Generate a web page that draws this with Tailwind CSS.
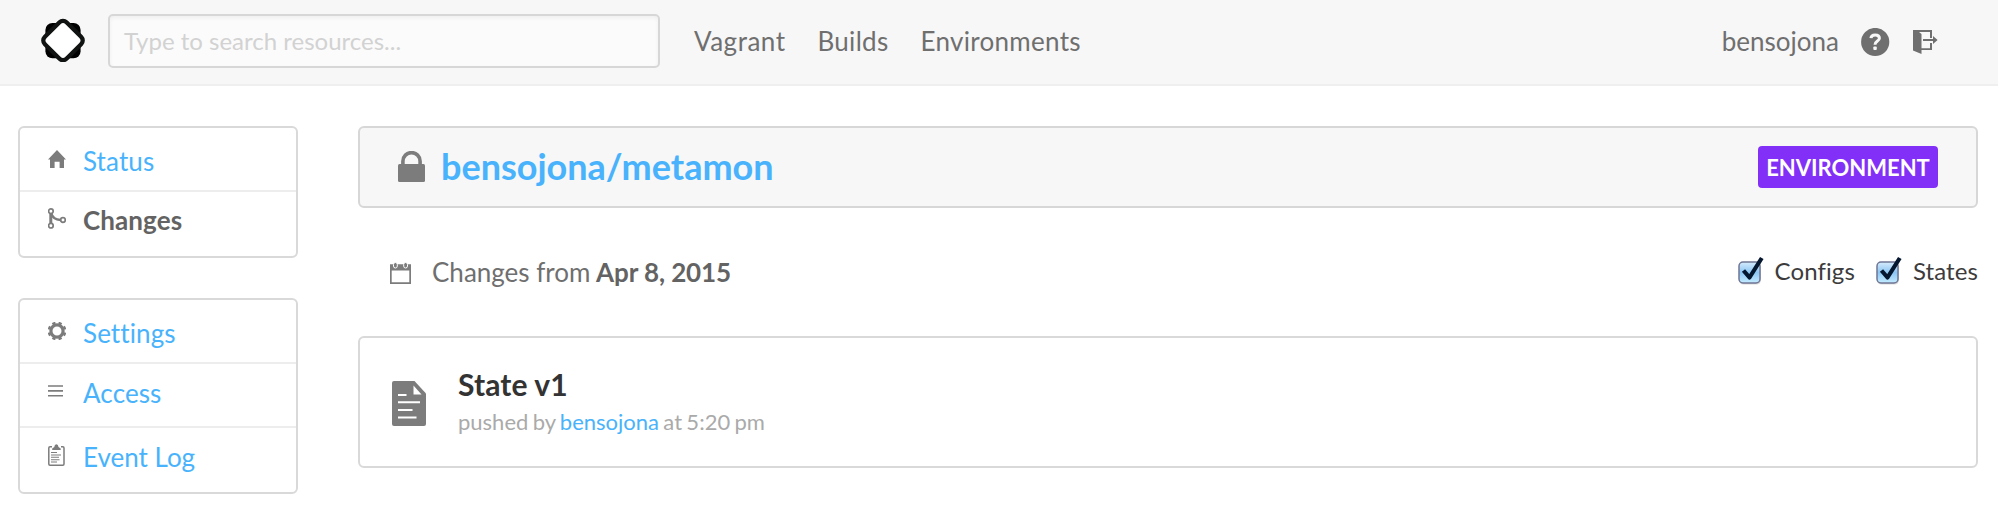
<!DOCTYPE html>
<html lang="en">
<head>
<meta charset="utf-8">
<title>bensojona/metamon</title>
<script src="https://cdn.jsdelivr.net/npm/@tailwindcss/browser@4"></script>
</head>
<body class="w-[1998px] h-[510px] overflow-hidden bg-white font-[Lato,sans-serif] text-[26px] leading-8 text-[#6f6f6f] antialiased">

<header class="flex h-[86px] items-start border-b-2 border-[#efefef] bg-[#f7f7f7] pl-[41px] pr-[60px]">
  <svg class="mt-[18px] size-[44px] shrink-0" viewBox="0 0 44 44">
    <rect x="4.4" y="5" width="35.2" height="35.2" rx="7" fill="#000"/>
    <rect x="4.500" y="5" width="35" height="35" rx="7" transform="rotate(45 22 22.5)" fill="#101312"/>
    <rect x="8.700" y="9.200" width="26.600" height="26.600" rx="3.500" transform="rotate(45 22 22.5)" fill="#fff"/>
  </svg>
  <div class="ml-[23px] mt-[14px] flex h-[54px] w-[552px] items-center rounded-[5px] border-2 border-[#d7d7d7] bg-[#fbfbfb] pl-[14px] shadow-[inset_0_2px_4px_rgba(0,0,0,0.05)]">
    <span class="text-2xl text-[#d2d2d2]">Type to search resources...</span>
  </div>
  <nav class="ml-[34px] mt-[25px] flex gap-[32px] tracking-[0.3px]">
    <a class="tracking-[0.5px]">Vagrant</a><a>Builds</a><a>Environments</a>
  </nav>
  <div class="ml-auto flex">
    <span class="mt-[25px]">bensojona</span>
    <svg class="ml-[22px] mt-[28px] size-[29px]" viewBox="0 0 29 29">
      <circle cx="14.2" cy="14" r="14.1" fill="#6f6f6f"/>
      <path d="M9.900 10.200C10.100 7.500 11.900 6.900 14.200 6.900c2.600 0 4.200 1.400 4.200 3.300 0 3-4.400 2.800-4.400 6.600" fill="none" stroke="#f7f7f7" stroke-width="3"/>
      <rect x="12.300" y="18.600" width="3.500" height="3.500" rx="1" fill="#f7f7f7"/>
    </svg>
    <svg class="ml-[23px] mt-[30px] h-[25px] w-[25px]" viewBox="0 0 25 25" fill="#6f6f6f">
      <path d="M0 0h19v8h-2V2H6l2.500 2V24L0 20.500z"/>
      <path d="M8 18.200h9V13h2v7H8zM10 9h10V6l4.600 4L20 14v-3H10z"/>
    </svg>
  </div>
</header>

<div class="flex pl-[18px] pr-5 pt-10">
  <aside class="flex w-[280px] shrink-0 flex-col gap-[40px] text-[#48b3fc] tracking-[0.1px]">
    <ul class="rounded-[6px] border-2 border-[#d9d9d9]">
      <li class="flex h-[64px] items-start border-b-2 border-[#ededed] pl-[28px] pt-[17px]">
        <svg class="mt-[5px] h-[18px] w-[18px]" viewBox="0 0 18 18" fill="#7c7c7c"><path d="M9 0l9 9.600h-2V18h-4.400v-6.200H6.600V18H2V9.600H0z"/></svg>
        <a class="ml-[17px]">Status</a>
      </li>
      <li class="flex h-[64px] items-start pl-[28px] pt-[12px]">
        <svg class="mt-[4px] h-[21px] w-[18px]" viewBox="0 0 18 21" fill="none" stroke="#7c7c7c" stroke-width="1.700">
          <path d="M2.800 5.500v10" stroke-width="3"/>
          <path d="M3 5C4.500 10 8 11.800 12.500 12" stroke-width="2.600"/>
          <circle cx="2.900" cy="3.200" r="2.300" fill="#fff"/><circle cx="2.900" cy="17.700" r="2.300" fill="#fff"/><circle cx="15" cy="12" r="2.300" fill="#fff"/>
        </svg>
        <a class="ml-[17px] font-bold text-[#636363]">Changes</a>
      </li>
    </ul>
    <ul class="rounded-[6px] border-2 border-[#d9d9d9]">
      <li class="flex h-[64px] items-start border-b-2 border-[#ededed] pl-[28px] pt-[17px]">
        <svg class="mt-[5px] size-[18px]" viewBox="0 0 18 18" fill="none" stroke="#7c7c7c">
          <circle cx="9" cy="9" r="6.100" stroke-width="3.200"/>
          <circle cx="9" cy="9" r="8.200" stroke-width="2.400" pathLength="80" stroke-dasharray="5 5" stroke-dashoffset="7.500"/>
        </svg>
        <a class="ml-[17px]">Settings</a>
      </li>
      <li class="flex h-[64px] items-start border-b-2 border-[#ededed] pl-[28px] pt-[13px]">
        <svg class="mt-[8px] h-[12px] w-[18px]" viewBox="0 0 18 12" fill="#7c7c7c"><path d="M0 .3h15v1.500H0zM0 5h15v1.800H0zM0 9.900h15v1.500H0z"/></svg>
        <a class="ml-[17px]">Access</a>
      </li>
      <li class="flex h-[64px] items-start pl-[28px] pt-[13px]">
        <svg class="mt-[3px] h-[22px] w-[18px]" viewBox="0 0 18 22" fill="#7c7c7c">
          <path d="M4 2.700H2Q.8 2.700.8 4v16q0 1.200 1.200 1.200h12.800q1.200 0 1.200-1.200V4q0-1.300-1.200-1.300H13" fill="none" stroke="#7c7c7c" stroke-width="1.500"/>
          <path d="M4.200 6V4.500L6.300 3Q6.500.2 8.400.2T10.500 3l2.200 1.500V6z"/>
          <path d="M3 8h6v1H3zM3 10.400h10v1H3zM3 12.800h8v1H3zM3 15.200h8.500v1H3zM3 17.600h6v1H3z"/>
        </svg>
        <a class="ml-[17px] tracking-normal">Event Log</a>
      </li>
    </ul>
  </aside>

  <main class="ml-[60px] flex flex-1 flex-col">
    <section class="flex h-[82px] items-start rounded-[6px] border-2 border-[#d7d7d7] bg-[#f7f7f7] pl-[38px] pr-[38px]">
      <svg class="mt-[23px] h-[31px] w-[27px]" viewBox="0 0 27 31" fill="#7c7c7c">
        <path d="M4.900 14V10.200a8.600 8.600 0 0 1 17.200 0V14" fill="none" stroke="#7c7c7c" stroke-width="3.600"/>
        <rect y="13" width="27" height="18" rx="1.500"/>
      </svg>
      <h1 class="ml-[16px] mt-[16px] text-4xl leading-[44px] font-bold text-[#48b3fc]">bensojona/metamon</h1>
      <span class="ml-auto mt-[18px] h-[42px] w-[180px] rounded-[4px] bg-[#8230f8] text-center text-[22px] leading-[44px] font-bold text-white">ENVIRONMENT</span>
    </section>

    <div class="flex h-[128px] items-start pl-[32px]">
      <svg class="mt-[54px] h-[22px] w-[22px]" viewBox="0 0 22 22" fill="#7c7c7c">
        <path fill-rule="evenodd" d="M0 2.300h21V22H0zM1.700 8.500v11.800h17.600V8.500z"/>
        <rect x="3.500" y=".5" width="3.800" height="5.500" rx="1.900" stroke="#fff" stroke-width="1"/>
        <rect x="13.700" y=".5" width="3.800" height="5.500" rx="1.900" stroke="#fff" stroke-width="1"/>
      </svg>
      <p class="ml-[20px] mt-[48px]">Changes from <strong class="-ml-px font-bold tracking-[-0.1px] text-[#636363]">Apr 8, 2015</strong></p>
      <div class="ml-auto mt-[47px] flex text-2xl tracking-[0.1px] text-[#3c3c3c]">
        <label class="flex">
          <svg class="mr-[9px] h-[34px] w-[29px]" viewBox="0 0 29 34">
            <defs><linearGradient id="box" x1="0" y1="0" x2="0" y2="1"><stop offset="0" stop-color="#d6ebfb"/><stop offset=".5" stop-color="#8cc6f4"/><stop offset="1" stop-color="#c4ecff"/></linearGradient></defs>
            <rect x="2" y="8" width="22" height="21.500" rx="4.500" fill="#000" opacity=".15"/>
            <rect x="2" y="7" width="21" height="21" rx="4" fill="url(#box)" stroke="#6f7594" stroke-width="1.500"/>
            <path d="M6.500 15.500l6 7L24.800 3" fill="none" stroke="#04172e" stroke-width="4.200" stroke-linejoin="round"/>
          </svg>Configs</label>
        <label class="ml-[20px] flex">
          <svg class="mr-[9px] h-[34px] w-[29px]" viewBox="0 0 29 34">
            <rect x="2" y="8" width="22" height="21.500" rx="4.500" fill="#000" opacity=".15"/>
            <rect x="2" y="7" width="21" height="21" rx="4" fill="url(#box)" stroke="#6f7594" stroke-width="1.500"/>
            <path d="M6.500 15.500l6 7L24.800 3" fill="none" stroke="#04172e" stroke-width="4.200" stroke-linejoin="round"/>
          </svg>States</label>
      </div>
    </div>

    <section class="flex h-[132px] items-start rounded-[6px] border-2 border-[#d9d9d9] pl-[32px]">
      <svg class="mt-[43px] h-[45px] w-[34px]" viewBox="0 0 34 45">
        <path d="M2 0h20.500L34 12.500V43q0 2-2 2H2q-2 0-2-2V2Q0 0 2 0z" fill="#7c7c7c"/>
        <path d="M21.500 4.500v9H29.500zM6 13h8.500v2H6zM6 20.300h22v2H6zM6 28h14.500v2H6zM6 35.600h18.500v2H6z" fill="#fff"/>
      </svg>
      <div class="ml-[32px] mt-[27px]">
        <h2 class="text-3xl leading-[38px] font-bold tracking-[0.1px] text-[#333]">State v1</h2>
        <p class="mt-[3px] text-[22px] leading-8 text-[#aaa] [word-spacing:-1.3px]">pushed by <a class="text-[#48b3fc]">bensojona</a> at 5:20 pm</p>
      </div>
    </section>
  </main>
</div>
</body>
</html>
